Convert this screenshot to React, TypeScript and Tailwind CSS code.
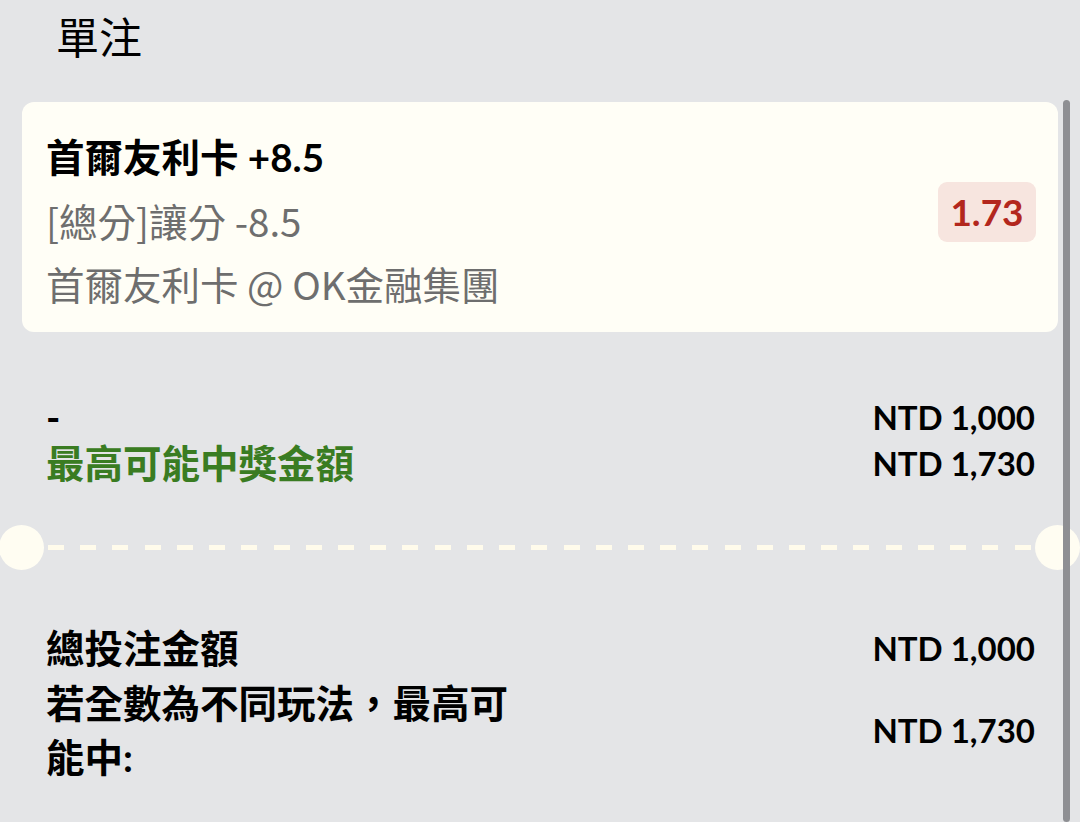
import React from 'react';

const font = { fontFamily: 'Lato, "Noto Sans CJK TC", sans-serif' };
const cjk = { fontFamily: '"Noto Sans CJK TC", sans-serif' };

const dashes = Array.from({ length: 31 });

export default function App() {
  return (
    <div style={font} className="relative w-[1080px] h-[822px] overflow-hidden bg-[#e4e5e7] text-black">
      {/* header */}
      <div className="pl-[56px] pt-[10px] text-[43px] leading-[56px] font-normal">單注</div>

      {/* bet card */}
      <div className="mx-[22px] mt-[36px] rounded-[12px] bg-[#fffef6] pl-[24px] pr-[22px] pt-[24px] pb-[17px] flex items-center justify-between">
        <div className="text-[38.5px] leading-[63px]">
          <div className="font-bold">首爾友利卡 +8.5</div>
          <div style={cjk} className="text-[#6e6e6e]">[總分]讓分 -8.5</div>
          <div style={cjk} className="text-[#6e6e6e]">首爾友利卡 @ OK金融集團</div>
        </div>
        <div className="mt-[-18px] w-[98px] h-[60px] rounded-[9px] bg-[#f7e5df] flex items-center justify-center text-[37px] font-bold text-[#b3271d]">
          1.73
        </div>
      </div>

      {/* stake + potential win */}
      <div className="mt-[62px] pl-[46px] pr-[45px] text-[38.5px] leading-[46px] font-bold">
        <div className="flex justify-between">
          <span>-</span>
          <span className="text-[33px]">NTD 1,000</span>
        </div>
        <div className="flex justify-between">
          <span className="text-[#3a7c22]">最高可能中獎金額</span>
          <span className="text-[33px]">NTD 1,730</span>
        </div>
      </div>

      {/* ticket divider */}
      <div className="mt-[39px] flex items-center h-[45px]">
        <div className="w-[45px] h-[45px] rounded-full bg-[#fffdf2] shrink-0 -ml-[1px]" />
        <div className="flex-1 flex justify-between px-[4px]">
          {dashes.map((_, i) => (
            <div key={i} className="w-[16px] h-[5px] bg-[#fffbeb]" />
          ))}
        </div>
        <div className="w-[45px] h-[45px] rounded-full bg-[#fffdf2] shrink-0" />
      </div>

      {/* totals */}
      <div className="mt-[50px] pl-[46px] pr-[45px] font-bold text-[38.5px]">
        <div className="flex justify-between items-center leading-[56px]">
          <span>總投注金額</span>
          <span className="text-[33px]">NTD 1,000</span>
        </div>
        <div className="flex justify-between items-center leading-[54px]">
          <span className="w-[485px]">若全數為不同玩法，最高可能中:</span>
          <span className="text-[33px]">NTD 1,730</span>
        </div>
      </div>

      {/* scrollbar */}
      <div className="absolute right-[10px] top-[100px] bottom-0 w-[7px] rounded-full bg-[#8e8f93]" />
    </div>
  );
}
